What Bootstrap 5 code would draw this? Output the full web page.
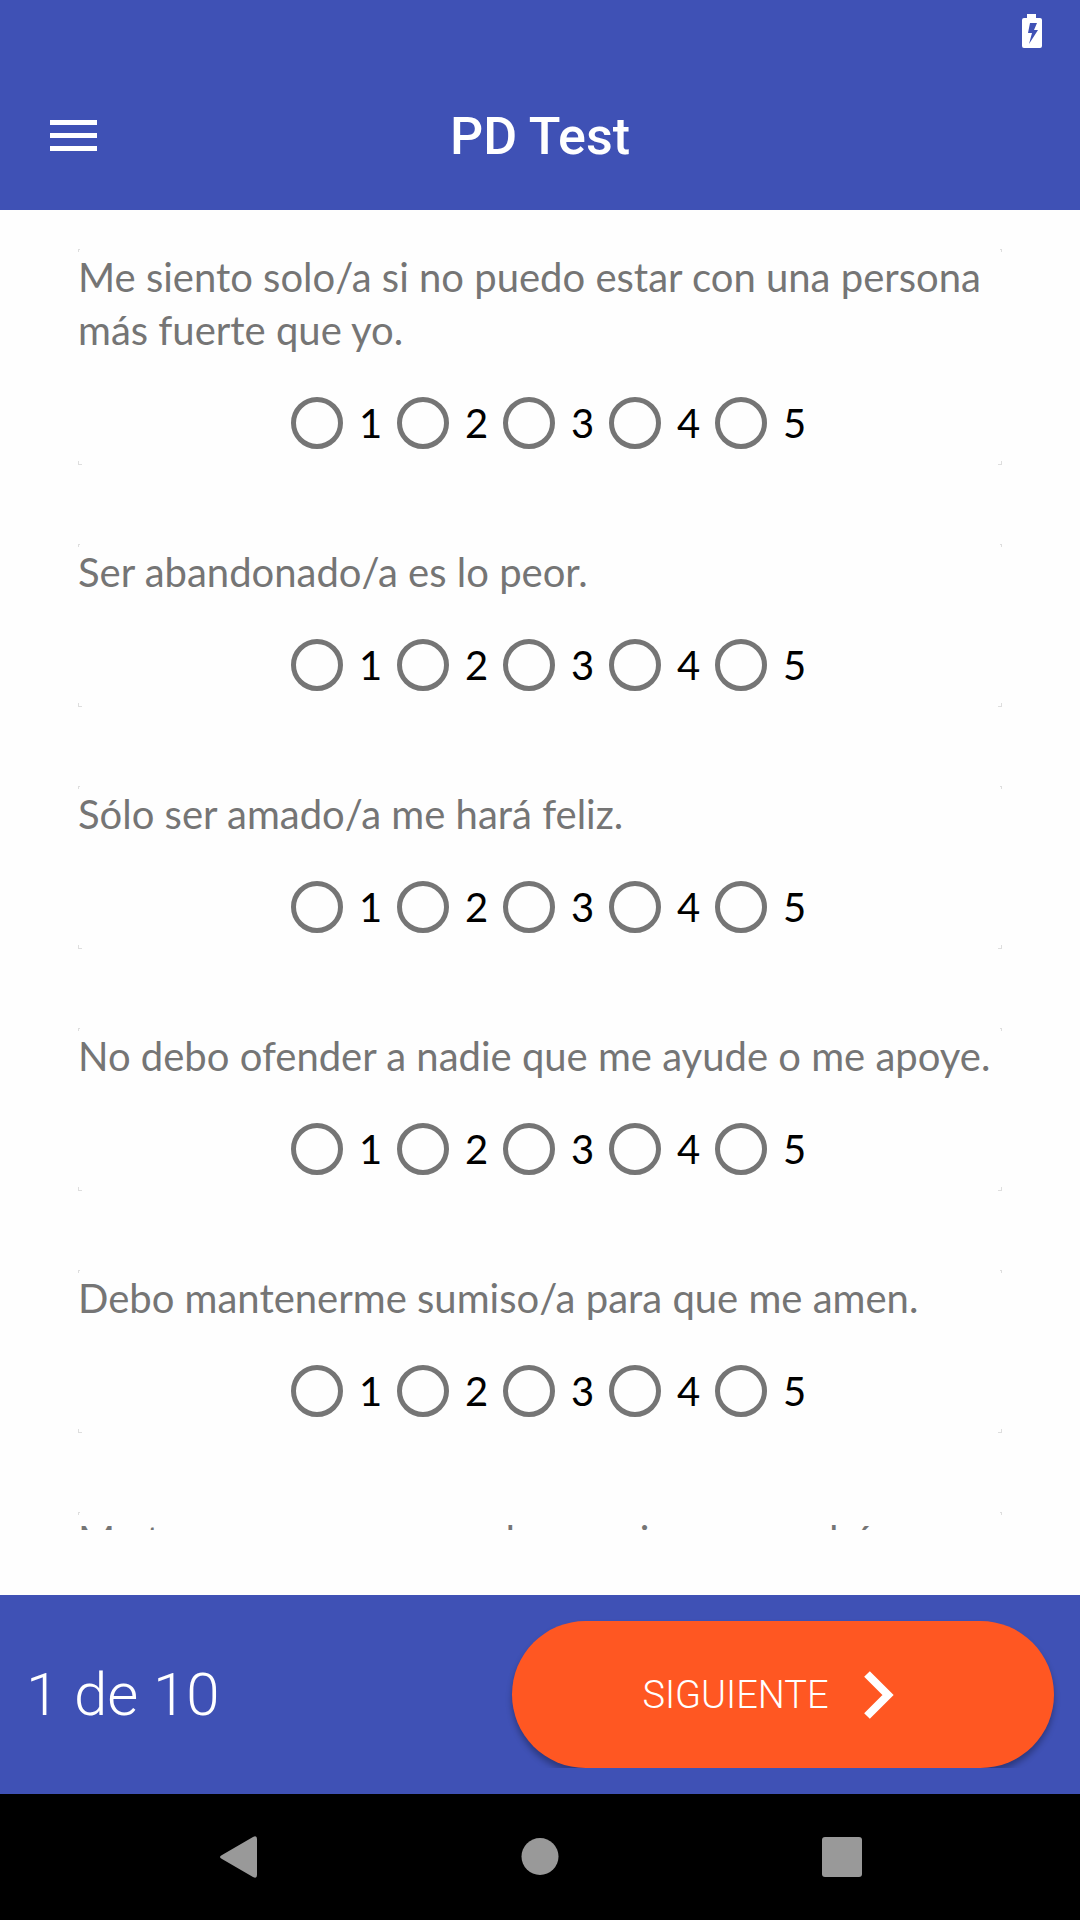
<!DOCTYPE html>
<html lang="es">
<head>
<meta charset="utf-8">
<meta name="viewport" content="width=device-width, initial-scale=1">
<title>PD Test</title>
<link href="https://cdn.jsdelivr.net/npm/bootstrap@5.3.0/dist/css/bootstrap.min.css" rel="stylesheet">
<style>
  :root { --indigo: #3f51b5; --ink: #757575; }
  body { background: #fefefe; font-family: Lato, "Open Sans", sans-serif; }
  svg { display: block; flex: none; }
  .status-bar, .app-bar, .pager { background: var(--indigo); font-family: Roboto, sans-serif; }
  .status-bar { height: 63px; padding: 14px 38px 0; }
  .app-bar { height: 147px; padding: 0 50px; }
  .side { flex: 1 1 0; }
  .app-title { font-size: 52px; line-height: 64px; font-weight: 500; }
  .questions { padding: 39px 78px 0; gap: 79px; margin-bottom: 65px; min-height: 0; }
  /* Only the rounded corners of each card's outline are visible */
  .question {
    --tick: #dedede;
    flex: none;
    background:
      linear-gradient(var(--tick), var(--tick)) 0 0 / 2px 1px,
      linear-gradient(var(--tick), var(--tick)) 0 0 / 1px 3px,
      linear-gradient(var(--tick), var(--tick)) 100% 0 / 2px 1px,
      linear-gradient(var(--tick), var(--tick)) 100% 0 / 1px 3px,
      linear-gradient(var(--tick), var(--tick)) 0 100% / 4px 1px,
      linear-gradient(var(--tick), var(--tick)) 0 100% / 1px 4px,
      linear-gradient(var(--tick), var(--tick)) 100% 100% / 4px 1px,
      linear-gradient(var(--tick), var(--tick)) 100% 100% / 1px 4px;
    background-repeat: no-repeat;
  }
  .question-text { font-size: 40px; line-height: 53px; color: var(--ink); padding-top: 2px; }
  .scale { padding: 40px 0 16px; }
  .option { width: 106px; padding-left: 16px; gap: 16px; color: #000; font-size: 40px; line-height: 52px; }
  .option .form-check-input { width: 52px; height: 52px; border: 5px solid var(--ink); background-color: transparent; flex: none; }
  .option .form-check-input:checked { border-color: #ff5722; background-color: #ff5722; }
  .pager { padding: 26px; height: 199px; }
  .page-count { font-size: 60px; line-height: 80px; font-weight: 300; }
  .next-btn {
    --bs-btn-bg: #ff5722; --bs-btn-color: #fff; --bs-btn-hover-bg: #f4511e; --bs-btn-hover-color: #fff;
    --bs-btn-active-bg: #e64a19; --bs-btn-active-color: #fff;
    width: 542px; height: 147px; gap: 35px; padding: 0 42px 0 12px; font-size: 38px; line-height: 48px; font-weight: 300;
    border: 0; box-shadow: 0 5px 6px rgba(0, 0, 0, .3); clip-path: inset(-8px -8px 0 -8px);
  }
  .system-nav { height: 126px; background: #000; padding: 0 165px; }
</style>
</head>
<body>
<div class="vh-100 d-flex flex-column overflow-hidden">
  <div class="status-bar d-flex justify-content-end align-items-start flex-shrink-0">
    <svg width="20" height="34" viewBox="0 0 20 34" role="img" aria-label="Cargando"><path fill="#fff" fill-rule="evenodd" d="M5 0h9v4h4a2 2 0 0 1 2 2v26a2 2 0 0 1-2 2H2a2 2 0 0 1-2-2V6a2 2 0 0 1 2-2h3ZM8 9 6 19h4L7 30l9-14h-4l3-7Z"/></svg>
  </div>
  <header class="app-bar d-flex align-items-center text-white flex-shrink-0">
    <div class="side">
      <button type="button" class="btn p-0 border-0" aria-label="Menú">
        <svg width="47" height="33" viewBox="0 0 47 33" fill="#fff"><path d="M0 0h47v5H0zM0 13h47v5H0zM0 26h47v5H0z"/></svg>
      </button>
    </div>
    <h1 class="app-title m-0">PD Test</h1>
    <div class="side"></div>
  </header>

  <main class="questions d-flex flex-column flex-grow-1 overflow-hidden" id="questions"></main>

  <footer class="pager d-flex align-items-center justify-content-between text-white flex-shrink-0">
    <span class="page-count">1 de 10</span>
    <button type="button" class="next-btn btn rounded-pill d-flex align-items-center justify-content-center">
      SIGUIENTE
      <svg width="30" height="48" viewBox="0 0 30 48"><path d="M3 3 24 24 3 45" fill="none" stroke="#fff" stroke-width="8"/></svg>
    </button>
  </footer>
  <nav class="system-nav d-flex align-items-center flex-shrink-0" aria-label="Sistema">
    <div class="d-flex justify-content-between w-100">
      <button type="button" class="btn border-0 px-5 py-0" aria-label="Atrás"><svg width="50" height="44" viewBox="0 0 50 44"><path d="M9 20 40 2q4-2 4 2v36q0 4-4 2L9 24q-4-2 0-4Z" fill="#999"/></svg></button>
      <button type="button" class="btn border-0 px-5 py-0" aria-label="Inicio"><svg width="50" height="44" viewBox="0 0 50 44"><circle cx="25" cy="21.500" r="18.500" fill="#999"/></svg></button>
      <button type="button" class="btn border-0 px-5 py-0" aria-label="Recientes"><svg width="50" height="44" viewBox="0 0 50 44"><rect x="5" y="2" width="40" height="40" rx="3" fill="#999"/></svg></button>
    </div>
  </nav>
</div>

<script src="https://cdn.jsdelivr.net/npm/bootstrap@5.3.0/dist/js/bootstrap.bundle.min.js"></script>
<script>
  const options = [1, 2, 3, 4, 5];
  const questions = [
    { text: "Me siento solo/a si no puedo estar con una persona más fuerte que yo.", options },
    { text: "Ser abandonado/a es lo peor.", options },
    { text: "Sólo ser amado/a me hará feliz.", options },
    { text: "No debo ofender a nadie que me ayude o me apoye.", options },
    { text: "Debo mantenerme sumiso/a para que me amen.", options },
    { text: "Me tengo que asegurar de que siempre podré", options: [] }
  ];
  document.getElementById("questions").innerHTML = questions.map(({ text, options }, q) => `
    <section class="question" role="radiogroup" aria-labelledby="q${q}">
      <p class="question-text m-0" id="q${q}">${text}</p>
      <div class="scale d-flex justify-content-center">
        ${options.map(n => `
        <label class="option d-flex align-items-center" for="q${q}-${n}">
          <input class="form-check-input m-0" type="radio" name="q${q}" id="q${q}-${n}" value="${n}">${n}
        </label>`).join("")}
      </div>
    </section>`).join("");
</script>
</body>
</html>
